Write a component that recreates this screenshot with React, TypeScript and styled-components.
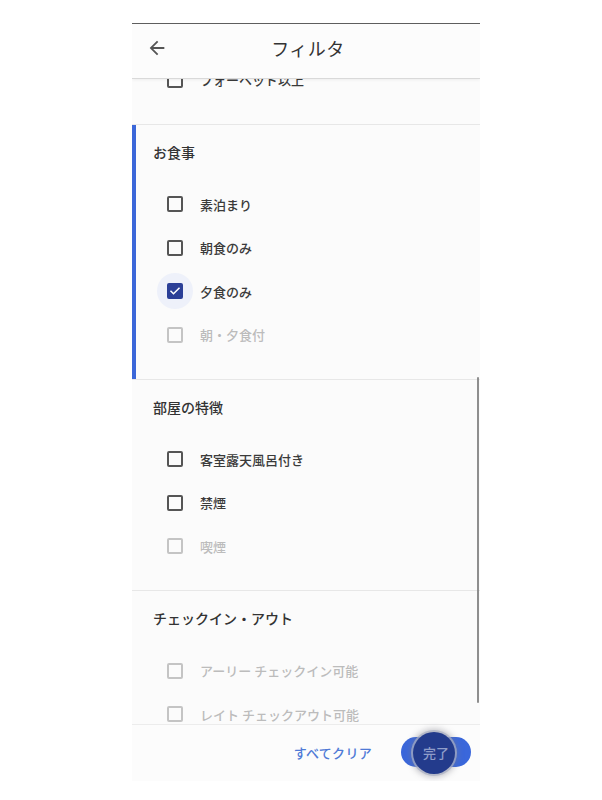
import React from "react";
import styled, { createGlobalStyle } from "styled-components";

const GlobalStyle = createGlobalStyle`
  html, body {
    margin: 0;
    padding: 0;
    background: #ffffff;
  }
  body {
    font-family: "Noto Sans CJK JP", "Noto Sans", Roboto, sans-serif;
    color: #333;
  }
`;

const Phone = styled.div`
  margin: 23px 0 0 132px;
  width: 348px;
  height: 757px;
  display: flex;
  flex-direction: column;
  background: #fbfbfb;
  border-top: 1px solid #5e5e5e;
  overflow: hidden;
`;

const Header = styled.header`
  position: relative;
  z-index: 2;
  height: 54px;
  flex: none;
  box-sizing: border-box;
  display: grid;
  grid-template-columns: 48px 1fr 48px;
  align-items: center;
  padding: 0 0 6px 14px;
  background: #fcfcfc;
  box-shadow: 0 1px 0 #d9d9d9, 0 2px 3px rgba(0, 0, 0, 0.06);
`;

const BackButton = styled.button`
  border: none;
  background: none;
  padding: 0;
  width: 22px;
  height: 22px;
  display: flex;
  align-items: center;
  justify-content: center;
  color: #555;
  cursor: pointer;
`;

const Title = styled.h1`
  margin: 0;
  text-align: center;
  font-size: 18px;
  font-weight: 400;
  color: #333;
  letter-spacing: 0.5px;
  padding-right: 10px;
`;

const ScrollArea = styled.div`
  position: relative;
  flex: 1;
  overflow: hidden;
`;

const ScrollContent = styled.div<{ $offset: number }>`
  margin-top: ${(p) => -p.$offset}px;
`;

const ScrollThumb = styled.div`
  position: absolute;
  right: 1px;
  top: 299px;
  width: 2px;
  height: 326px;
  background: #8e8e8e;
  border-radius: 1px;
`;

const Tail = styled.div`
  padding-bottom: 22px;
`;

const Section = styled.section<{ $active?: boolean }>`
  border-top: 1px solid #e7e7e7;
  padding: 15px 0 22px;
  box-shadow: ${(p) => (p.$active ? "inset 4px 0 0 #3b67d9" : "none")};
`;

const SectionTitle = styled.h2`
  margin: 0 0 19px;
  padding-left: 21px;
  height: 24px;
  line-height: 24px;
  font-size: 14px;
  font-weight: 500;
  color: #333;
`;

const List = styled.div`
  display: flex;
  flex-direction: column;
`;

const Row = styled.label<{ $disabled?: boolean }>`
  height: 43.5px;
  display: flex;
  align-items: center;
  padding-left: 35px;
  gap: 17px;
  font-size: 13px;
  font-weight: 500;
  color: ${(p) => (p.$disabled ? "#bcbcbc" : "#3a3a3a")};
`;

const BoxWrap = styled.span<{ $checked?: boolean }>`
  position: relative;
  width: 16px;
  height: 16px;
  flex: none;
  &::before {
    content: "";
    display: ${(p) => (p.$checked ? "block" : "none")};
    position: absolute;
    left: -10px;
    top: -10px;
    width: 36px;
    height: 36px;
    border-radius: 50%;
    background: #eef1fa;
  }
`;

const Box = styled.span<{ $checked?: boolean; $disabled?: boolean }>`
  position: relative;
  box-sizing: border-box;
  display: flex;
  align-items: center;
  justify-content: center;
  width: 16px;
  height: 16px;
  border-radius: 2px;
  border: 2px solid
    ${(p) => (p.$checked ? "#2b3f97" : p.$disabled ? "#c4c4c4" : "#555")};
  background: ${(p) => (p.$checked ? "#2b3f97" : "transparent")};
`;

const Footer = styled.footer`
  height: 57px;
  flex: none;
  display: flex;
  align-items: center;
  justify-content: flex-end;
  gap: 29px;
  padding-right: 9px;
  padding-bottom: 2px;
  box-sizing: border-box;
  background: #fcfcfc;
  border-top: 1px solid #ececec;
`;

const TextButton = styled.button`
  border: none;
  background: none;
  padding: 0;
  font-family: inherit;
  font-size: 13px;
  font-weight: 500;
  color: #4f7ad6;
  letter-spacing: 0.3px;
`;

const PrimaryButton = styled.button`
  position: relative;
  width: 70px;
  height: 30px;
  border: none;
  border-radius: 15px;
  background: #3a67db;
  font-family: inherit;
  font-size: 13px;
  font-weight: 500;
  color: #8f9dc9;
  padding: 0;
  overflow: visible;
`;

const Ripple = styled.span`
  position: absolute;
  left: 12px;
  top: -5px;
  width: 42px;
  height: 42px;
  border-radius: 50%;
  background: #233b8c;
  box-shadow: 0 0 0 2px rgba(170, 175, 195, 0.7), 0 0 6px 3px rgba(120, 120, 130, 0.45);
`;

const ButtonLabel = styled.span`
  position: relative;
  z-index: 1;
`;

const Check = () => (
  <svg width="12" height="12" viewBox="0 0 24 24">
    <path
      d="M4 12.5l5 5L20 6.5"
      fill="none"
      stroke="#fff"
      strokeWidth="3"
      strokeLinecap="square"
    />
  </svg>
);

type Item = { label: string; checked?: boolean; disabled?: boolean };

const Option = ({ label, checked, disabled }: Item) => (
  <Row $disabled={disabled}>
    <BoxWrap $checked={checked}>
      <Box $checked={checked} $disabled={disabled}>
        {checked && <Check />}
      </Box>
    </BoxWrap>
    <span>{label}</span>
  </Row>
);

const sections: { title: string; active?: boolean; items: Item[] }[] = [
  {
    title: "お食事",
    active: true,
    items: [
      { label: "素泊まり" },
      { label: "朝食のみ" },
      { label: "夕食のみ", checked: true },
      { label: "朝・夕食付", disabled: true },
    ],
  },
  {
    title: "部屋の特徴",
    items: [
      { label: "客室露天風呂付き" },
      { label: "禁煙" },
      { label: "喫煙", disabled: true },
    ],
  },
  {
    title: "チェックイン・アウト",
    items: [
      { label: "アーリー チェックイン可能", disabled: true },
      { label: "レイト チェックアウト可能", disabled: true },
    ],
  },
];

export default function App() {
  return (
    <>
      <GlobalStyle />
      <Phone>
        <Header>
          <BackButton aria-label="戻る">
            <svg width="22" height="22" viewBox="0 0 24 24">
              <path
                fill="currentColor"
                d="M20 11H7.83l5.59-5.59L12 4l-8 8 8 8 1.41-1.41L7.83 13H20v-2z"
              />
            </svg>
          </BackButton>
          <Title>フィルタ</Title>
          <span />
        </Header>
        <ScrollArea>
          <ScrollContent $offset={20}>
            <Tail>
              <Option label="フォーヘッド以上" />
            </Tail>
            {sections.map((s) => (
              <Section key={s.title} $active={s.active}>
                <SectionTitle>{s.title}</SectionTitle>
                <List>
                  {s.items.map((it) => (
                    <Option key={it.label} {...it} />
                  ))}
                </List>
              </Section>
            ))}
          </ScrollContent>
          <ScrollThumb />
        </ScrollArea>
        <Footer>
          <TextButton>すべてクリア</TextButton>
          <PrimaryButton>
            <Ripple />
            <ButtonLabel>完了</ButtonLabel>
          </PrimaryButton>
        </Footer>
      </Phone>
    </>
  );
}
